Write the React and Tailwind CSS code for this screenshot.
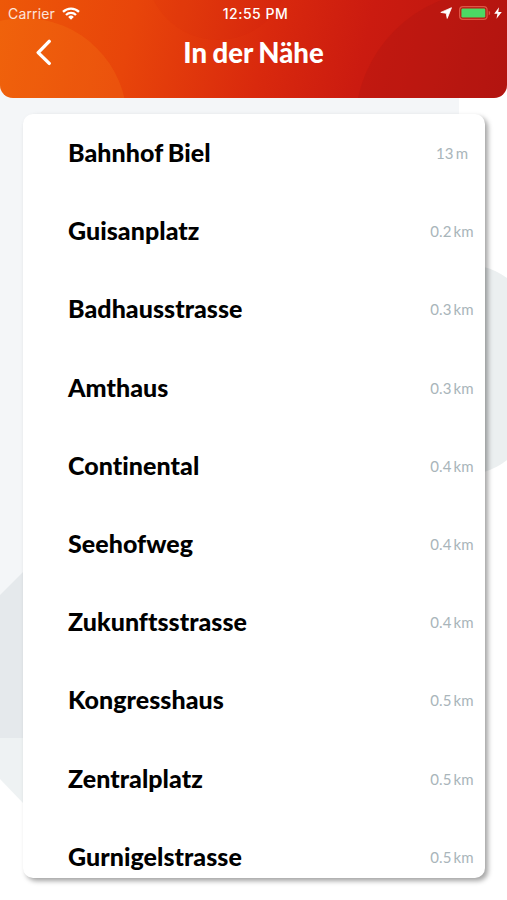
import React from 'react';

const stops = [
  { name: 'Bahnhof Biel', distance: '13 m' },
  { name: 'Guisanplatz', distance: '0.2 km' },
  { name: 'Badhausstrasse', distance: '0.3 km' },
  { name: 'Amthaus', distance: '0.3 km' },
  { name: 'Continental', distance: '0.4 km' },
  { name: 'Seehofweg', distance: '0.4 km' },
  { name: 'Zukunftsstrasse', distance: '0.4 km' },
  { name: 'Kongresshaus', distance: '0.5 km' },
  { name: 'Zentralplatz', distance: '0.5 km' },
  { name: 'Gurnigelstrasse', distance: '0.5 km' },
];

function WifiIcon() {
  return (
    <svg className="ml-[7px] h-[13px] w-[18px]" viewBox="0 0 18 13" fill="none" stroke="#fff" strokeWidth="2.3">
      <path d="M1 4.9a11.4 11.4 0 0 1 16 0" />
      <path d="M4 8a7.1 7.1 0 0 1 10 0" />
      <path d="M9 12.7 6.2 9.9a4 4 0 0 1 5.6 0z" fill="#fff" stroke="none" />
    </svg>
  );
}

function StatusBar() {
  return (
    <div className="grid h-[26px] grid-cols-3 items-center pl-[8px] pr-[5px] font-['Inter',sans-serif] text-[14px] text-white">
      <div className="flex items-center">
        <span className="tracking-[0.15px] text-white/85">Carrier</span>
        <WifiIcon />
      </div>
      <div className="pl-[1px] text-center text-[14px] font-medium tracking-[0.5px]">12:55 PM</div>
      <div className="flex items-center justify-end">
        <svg className="h-[12px] w-[12px]" viewBox="0 0 12 12" fill="#fff">
          <path d="M11.5.7 7.2 11.4 6.2 6.3.8 5.4z" stroke="#fff" strokeWidth=".8" strokeLinejoin="round" />
        </svg>
        <svg className="ml-[7px] h-[14px] w-[33px]" viewBox="0 0 33 14" fill="none">
          <rect x=".6" y=".6" width="27.5" height="12.8" rx="3.4" stroke="#de5545" strokeWidth="1.2" />
          <rect x="2.4" y="2.4" width="23.9" height="9.2" rx="1.3" fill="#4cd964" />
          <path d="M29.7 4.7c1.9.7 1.9 3.9 0 4.6z" fill="#de5545" />
        </svg>
        <svg className="ml-[2px] h-[12px] w-[8px]" viewBox="0 0 8 12" fill="#fff">
          <path d="M5 .2.2 6.8h3.2L2.5 11.8 7.8 4.9H4.3z" />
        </svg>
      </div>
    </div>
  );
}

function Header() {
  return (
    <header className="relative h-[98px] overflow-hidden rounded-b-[13px] bg-linear-[102deg,#ed5808_0%,#e8450a_26%,#d9290d_52%,#cb1b10_71%,#b91510_100%]">
      <svg className="absolute inset-0 h-full w-full" viewBox="0 0 507 98">
        <circle cx="24" cy="121" r="103" fill="#ff9a1f" fillOpacity=".16" />
        <circle cx="218" cy="-32" r="72" fill="#c40e0e" fillOpacity=".05" />
        <circle cx="490" cy="126" r="135" fill="#870d0d" fillOpacity=".12" />
      </svg>
      <div className="relative">
        <StatusBar />
        <div className="grid h-[54px] grid-cols-[80px_1fr_80px] items-center">
          <button type="button" aria-label="Zurück" className="pl-[35px]">
            <svg className="h-[28px] w-[18px]" viewBox="0 0 18 28" fill="none" stroke="#fff" strokeWidth="3.4" strokeLinecap="round" strokeLinejoin="round">
              <path d="M14.2 2.4 3.2 13.6l11 10.8" />
            </svg>
          </button>
          <h1 className="text-center font-['Lato',sans-serif] text-[27.5px] leading-[40px] font-black text-white [word-spacing:-1px]">In der Nähe</h1>
        </div>
      </div>
    </header>
  );
}

function StopRow({ name, distance }) {
  return (
    <li className="flex h-[78.2px] shrink-0 items-center justify-between pl-[45px] pr-[7px]">
      <span className="text-[25px] font-black tracking-[0.05px] text-black [font-variant-ligatures:none] [word-spacing:-1px]">{name}</span>
      <span className="w-[52px] pt-px text-center text-[15px] tracking-[0.1px] text-[#a9b5ba] [word-spacing:-1.8px]">{distance}</span>
    </li>
  );
}

export default function App() {
  return (
    <div className="relative isolate h-[900px] w-[507px] overflow-hidden bg-white font-['Lato',sans-serif]">
      <svg className="absolute inset-0 -z-10 h-full w-full" viewBox="0 0 507 900">
        <path d="M0 0h459v738H0z" fill="#f4f6f8" />
        <path d="M484 267q12 3 23 11v182q-10 8-23 12z" fill="#ebeff0" />
        <path d="M0 595 24 571v167H0z" fill="#e5e9ec" />
        <path d="M0 738h24v66L0 779z" fill="#eef2f3" />
      </svg>
      <Header />
      <main className="px-[23px] pt-[15.7px]">
        <ul className="flex h-[764px] w-[462px] flex-col overflow-hidden rounded-[10px] bg-white shadow-[3px_3px_5px_rgba(0,0,0,0.36)]">
          {stops.map((stop) => (
            <StopRow key={stop.name} name={stop.name} distance={stop.distance} />
          ))}
        </ul>
      </main>
    </div>
  );
}
